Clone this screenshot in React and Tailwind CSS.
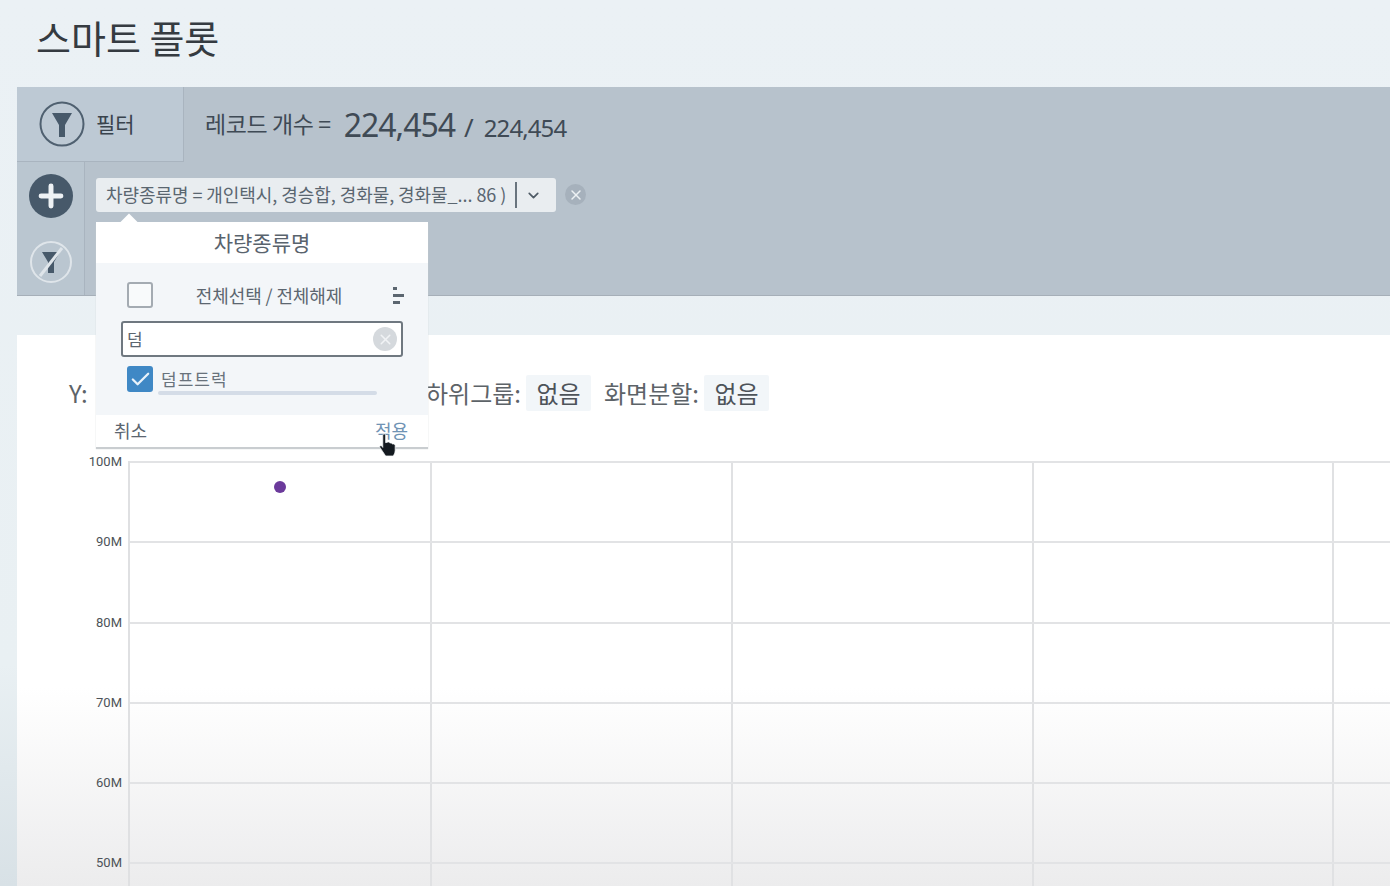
import { Check, ChevronDown, Plus, X } from "lucide-react";

const font = { fontFamily: '"Noto Sans CJK KR", "Noto Sans", sans-serif' };
const numFont = { fontFamily: '"Noto Sans", sans-serif' };
const yLabels = ["100M", "90M", "80M", "70M", "60M", "50M"];

function FunnelIcon({ className }) {
  return (
    <svg viewBox="0 0 46 46" className={className} fill="none">
      <circle cx="23" cy="23" r="21.5" stroke="#4f6070" strokeWidth="2" />
      <path d="M13 12 H33 L26 24 V36 H20 V24 Z" fill="#47596a" />
    </svg>
  );
}

function FunnelOffIcon({ className }) {
  return (
    <svg viewBox="0 0 44 44" className={className} fill="none">
      <circle cx="22" cy="22" r="20" stroke="#dfe5ea" strokeWidth="2" />
      <path d="M13 12 H31 L25 22 V33 H19 V22 Z" fill="#47596a" />
      <path d="M33 8 L11 36" stroke="#dfe5ea" strokeWidth="3" />
    </svg>
  );
}

function HandCursor() {
  return (
    <svg viewBox="0 0 22 26" className="absolute left-[282px] top-[211px] h-[25px] w-[21px]">
      <path
        d="M5 2 C5 .5 8 .5 8 2 V10 L10 9.5 C11 9 12.5 9.5 12.5 10.5 C13.5 10 15 10.5 15 11.5 C16 11 18 11.5 18 13 V18 C18 21 16.5 23 16 24 H8 L2 15 C1 13.5 3 12.5 4.5 14 L5 15 Z"
        fill="#141a20"
        stroke="#f4f7f9"
        strokeWidth="0.8"
      />
    </svg>
  );
}

function FilterPopup() {
  return (
    <div className="absolute left-[96px] top-[222px] z-10 w-[332px] bg-[#f3f6f9] shadow-[0_2px_1px_#c9cdd0] text-[#5c6670]">
      <div className="absolute -top-[6px] left-[27px] size-3 rotate-45 bg-white" />
      <div className="relative flex h-[41px] items-center justify-center bg-white text-[21px] text-[#59636d]">차량종류명</div>
      <div className="flex h-[58px] items-center pl-[31px] pr-[24px] pt-[6px]">
        <div className="size-[26px] rounded-[3px] border-2 border-[#a4abb2] bg-[#f8fafb]" />
        <div className="flex-1 pr-[8px] text-center text-[18px] tracking-[-0.1px]">전체선택 / 전체해제</div>
        <div className="flex flex-col gap-[4px]">
          <div className="h-[3px] w-[4px] bg-[#5b6670]" />
          <div className="h-[3px] w-[11px] bg-[#5b6670]" />
          <div className="h-[3px] w-[7px] bg-[#5b6670]" />
        </div>
      </div>
      <div className="mx-[25px] flex h-[36px] items-center justify-between rounded-[3px] border-2 border-[#6f7880] bg-white px-[4px] text-[17px]">
        <span>덤</span>
        <div className="flex size-[24px] items-center justify-center rounded-full bg-[#d5d9dd]">
          <X size={17} strokeWidth={2.2} className="text-[#f1f3f5]" />
        </div>
      </div>
      <div className="flex pl-[31px] pt-[9px]">
        <div className="flex size-[26px] items-center justify-center rounded-[3px] bg-[#3f88c5]">
          <Check size={23} strokeWidth={2.4} className="text-[#e8f2fa]" />
        </div>
        <div className="ml-[5px] w-[219px]">
          <div className="pl-[3px] pt-[1px] text-[17px] leading-[24px] tracking-[1px] text-[#68727c]">덤프트럭</div>
          <div className="h-[4px] rounded-full bg-[#d4dce7]" />
        </div>
      </div>
      <div className="mt-[20px] flex h-[32px] items-center justify-between bg-white pb-[2px] pl-[18px] pr-[20px] text-[18px]">
        <span>취소</span>
        <span className="text-[#6f93b4]">적용</span>
      </div>
      <HandCursor />
    </div>
  );
}

function Chart() {
  return (
    <div className="flex pl-[65px]">
      <div className="w-[45px] shrink-0">
        {yLabels.map((label) => (
          <div key={label} className="h-[80.3px] -translate-x-[5px] -translate-y-[9px] text-right text-[13px] leading-[20px] text-[#4d5358]" style={{ fontFamily: '"Roboto", sans-serif' }}>
            {label}
          </div>
        ))}
      </div>
      <div className="relative ml-[0.5px] flex-1 border-l-2 border-[#dfe0e2]">
        <div className="absolute left-[144px] top-[20px] size-[12px] rounded-full bg-[#6b3a9b]" />
        {yLabels.map((label) => (
          <div key={label} className="grid h-[80.3px] grid-cols-[302px_301px_301px_300px_1fr] border-t-2 border-[#e2e3e5]">
            <div className="border-r-2 border-[#e0e1e3]" />
            <div className="border-r-2 border-[#e0e1e3]" />
            <div className="border-r-2 border-[#e0e1e3]" />
            <div className="border-r-2 border-[#e0e1e3]" />
            <div />
          </div>
        ))}
      </div>
    </div>
  );
}

export default function App() {
  return (
    <div className="relative h-[886px] w-[1390px] overflow-hidden bg-[linear-gradient(to_bottom,#ebf1f5_0%,#e9f0f3_75%,#d8e1e6_100%)]" style={font}>
      <h1 className="flex h-[87px] items-center pb-[15px] pl-[36px] text-[38px] font-normal text-[#353b41]">스마트 플롯</h1>

      <section className="ml-[17px] h-[208px] bg-[#b7c2cc] shadow-[0_1px_0_#a6afb8]">
        <div className="flex h-[75px]">
          <div className="flex w-[167px] items-center border-r border-b border-[#a9b4bf] bg-[#bdc9d4] pl-[22px]">
            <FunnelIcon className="size-[46px]" />
            <span className="ml-[11px] text-[21px] text-[#39434d]">필터</span>
          </div>
          <div className="flex items-baseline pl-[21px] pt-[16px] text-[#3f4a55]">
            <span className="-translate-y-[4px] text-[23px] tracking-[-0.4px]">레코드 개수 =</span>
            <span className="ml-[13px] text-[32px] leading-[44px] tracking-[-1px]" style={numFont}>224,454</span>
            <span className="ml-[9px] text-[26px]" style={numFont}>/</span>
            <span className="ml-[10px] text-[24px] tracking-[-0.9px]" style={numFont}>224,454</span>
          </div>
        </div>
        <div className="flex h-[133px]">
          <div className="flex w-[68px] flex-col items-center gap-[22px] border-r border-[#a9b4bf] bg-[#bac6d0] pt-[12px]">
            <div className="flex size-[44px] items-center justify-center rounded-full bg-[#47596a]">
              <Plus size={34} strokeWidth={3.5} className="text-[#eef2f5]" />
            </div>
            <FunnelOffIcon className="size-[44px]" />
          </div>
          <div className="flex items-start pl-[11px] pt-[16px]">
            <div className="flex h-[34px] w-[460px] items-center rounded-[3px] bg-[#e9edf0] pl-[10px] text-[18px] leading-[30px] tracking-[-0.06px] text-[#5a6670]">
              <span className="-translate-y-[1px] whitespace-nowrap">차량종류명 = 개인택시, 경승합, 경화물, 경화물_... 86 )</span>
              <div className="ml-[9px] h-[26px] w-[2px] shrink-0 bg-[#69747e]" />
              <ChevronDown size={17} strokeWidth={2.4} className="ml-[8px] shrink-0 text-[#4f5b66]" />
            </div>
            <div className="ml-[9px] mt-[6px] flex size-[21px] items-center justify-center rounded-full bg-[#a6b1bc]">
              <X size={16} strokeWidth={2.2} className="text-[#edf1f4]" />
            </div>
          </div>
        </div>
      </section>

      <section className="ml-[17px] mt-[40px] h-[551px] bg-[linear-gradient(to_bottom,#ffffff_0%,#ffffff_64%,#ececed_100%)]">
        <div className="flex h-[126px] items-center pb-[11px] pl-[52px] text-[24px] text-[#5d6368]">
          <span className="w-[357px]">Y:</span>
          <span>하위그룹:</span>
          <span className="ml-[5px] flex h-[36px] w-[65px] items-center justify-center rounded-[2px] bg-[#f2f6f9] text-[#4d5359]">없음</span>
          <span className="ml-[13px]">화면분할:</span>
          <span className="ml-[5px] flex h-[36px] w-[65px] items-center justify-center rounded-[2px] bg-[#f2f6f9] text-[#4d5359]">없음</span>
        </div>
        <Chart />
      </section>

      <FilterPopup />
    </div>
  );
}
